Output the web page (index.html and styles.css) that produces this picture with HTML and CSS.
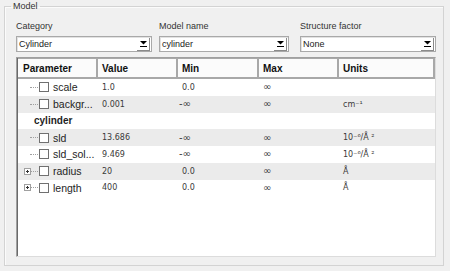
FILE: index.html
```html
<!DOCTYPE html>
<html>
<head>
<meta charset="utf-8">
<title>Model</title>
<link rel="stylesheet" href="styles.css">
</head>
<body>
<fieldset class="group">
  <legend>Model</legend>
  <div class="selectors">
    <div class="field">
      <label>Category</label>
      <div class="combo w136"><span>Cylinder</span><i class="drop"><svg width="7" height="6" viewBox="0 0 7 6"><polygon points="0,0 7,0 3.5,3.5" fill="#000"/><rect x="0" y="5" width="7" height="1" fill="#000"/></svg></i></div>
    </div>
    <div class="field">
      <label>Model name</label>
      <div class="combo w130"><span>cylinder</span><i class="drop"><svg width="7" height="6" viewBox="0 0 7 6"><polygon points="0,0 7,0 3.5,3.5" fill="#000"/><rect x="0" y="5" width="7" height="1" fill="#000"/></svg></i></div>
    </div>
    <div class="field">
      <label>Structure factor</label>
      <div class="combo w136"><span>None</span><i class="drop"><svg width="7" height="6" viewBox="0 0 7 6"><polygon points="0,0 7,0 3.5,3.5" fill="#000"/><rect x="0" y="5" width="7" height="1" fill="#000"/></svg></i></div>
    </div>
  </div>
  <div class="tree">
    <div class="row head">
      <div class="hc">Parameter</div><div class="hc">Value</div><div class="hc">Min</div><div class="hc">Max</div><div class="hc last">Units</div>
    </div>
    <div class="row">
      <div class="pc"><i class="branch"></i><i class="cb"></i><span class="pn">scale</span></div>
      <div class="vc">1.0</div><div class="vc">0.0</div><div class="vc inf">∞</div><div class="vc"></div>
    </div>
    <div class="row alt">
      <div class="pc"><i class="branch"></i><i class="cb"></i><span class="pn">backgr...</span></div>
      <div class="vc">0.001</div><div class="vc inf neg">-∞</div><div class="vc inf">∞</div><div class="vc">cm⁻¹</div>
    </div>
    <div class="row">
      <div class="pc"><span class="pn grp">cylinder</span></div>
      <div class="vc"></div><div class="vc"></div><div class="vc"></div><div class="vc"></div>
    </div>
    <div class="row alt">
      <div class="pc"><i class="branch"></i><i class="cb"></i><span class="pn">sld</span></div>
      <div class="vc">13.686</div><div class="vc inf neg">-∞</div><div class="vc inf">∞</div><div class="vc">10⁻⁶/Å ²</div>
    </div>
    <div class="row">
      <div class="pc"><i class="branch"></i><i class="cb"></i><span class="pn">sld_sol...</span></div>
      <div class="vc">9.469</div><div class="vc inf neg">-∞</div><div class="vc inf">∞</div><div class="vc">10⁻⁶/Å ²</div>
    </div>
    <div class="row alt">
      <div class="pc"><i class="exp"></i><i class="branch short"></i><i class="cb"></i><span class="pn">radius</span></div>
      <div class="vc">20</div><div class="vc">0.0</div><div class="vc inf">∞</div><div class="vc">Å</div>
    </div>
    <div class="row">
      <div class="pc"><i class="exp"></i><i class="branch short"></i><i class="cb"></i><span class="pn">length</span></div>
      <div class="vc">400</div><div class="vc">0.0</div><div class="vc inf">∞</div><div class="vc">Å</div>
    </div>
  </div>
</fieldset>
</body>
</html>
```
FILE: styles.css
```css
* { box-sizing: border-box; }
html, body { margin: 0; padding: 0; }
body {
  background: #f0f0f0;
  width: 450px;
  height: 271px;
  overflow: hidden;
  font-family: "Liberation Sans", Arial, sans-serif;
  color: #1e1e1e;
}
.group {
  margin: 0 0 0 4px;
  width: 440px;
  height: 266px;
  min-width: 0;
  padding: 8px 6px 0 11px;
  border: 1px solid #d3d3d3;
  box-shadow: inset 1px 1px #fbfbfb;
}
.group legend {
  font-size: 9px;
  line-height: 12px;
  padding: 0 2px;
  margin-left: -5px;
  color: #333;
}
.selectors {
  display: grid;
  grid-template-columns: 143px 141px 136px;
}
.field label {
  display: block;
  font-size: 9px;
  line-height: 12px;
  color: #333;
}
.combo {
  margin-top: 4px;
  height: 16px;
  border: 1px solid #a9a9a9;
  background: #fff;
  display: flex;
  align-items: center;
  justify-content: space-between;
  padding: 0 1px 0 2px;
  box-shadow: inset 1px 1px #e2e2e2;
}
.w136 { width: 136px; }
.w130 { width: 130px; }
.combo span { font-size: 9px; color: #222; }
.drop {
  width: 13px;
  height: 13px;
  border-right: 1px solid #8a8a8a;
  border-bottom: 1px solid #8a8a8a;
  background: #fff;
  display: flex;
  align-items: center;
  justify-content: center;
}
.drop svg { display: block; }
.tree {
  margin-top: 5px;
  width: 420px;
  height: 200px;
  background: #fff;
  border: 1px solid;
  border-color: #a0a0a0 #dcdcdc #dcdcdc #a0a0a0;
  padding-left: 1px;
  box-shadow: inset 1px 0 #6a6a6a;
}
.row {
  display: grid;
  grid-template-columns: 80px 80px 81px 80px 1fr;
  height: 16.75px;
  align-items: center;
}
.row.alt { background: #ebebeb; }
.head {
  height: 21px;
  background: #fbfbfb;
  border-top: 1px solid #a8a8a8;
  border-bottom: 2px solid #a8a8a8;
  align-items: stretch;
}
.hc {
  font-size: 10px;
  font-weight: bold;
  color: #111;
  padding-left: 4px;
  display: flex;
  align-items: center;
  border-right: 2px solid #a8a8a8;
}
.hc:first-child { padding-left: 5px; }
.pc {
  display: flex;
  align-items: center;
  height: 100%;
}
.branch {
  width: 8px;
  margin-left: 12px;
  border-top: 1px dotted #a0a0a0;
}
.branch.short { width: 7px; margin-left: 0; }
.exp {
  position: relative;
  width: 7px;
  height: 7px;
  margin-left: 6px;
  border: 1px solid #a0a0a0;
  background: #fff;
}
.exp::before {
  content: "";
  position: absolute;
  left: 1px;
  top: 2px;
  width: 3px;
  height: 1px;
  background: #333;
}
.exp::after {
  content: "";
  position: absolute;
  left: 2px;
  top: 1px;
  width: 1px;
  height: 3px;
  background: #333;
}
.cb {
  width: 10px;
  height: 10px;
  margin-left: 1px;
  border: 1px solid #707070;
  background: #fff;
}
.pn {
  margin-left: 4px;
  font-size: 10.5px;
  color: #1e1e1e;
  white-space: nowrap;
}
.pn.grp {
  margin-left: 16px;
  font-weight: bold;
  font-size: 10px;
}
.vc {
  padding-left: 4px;
  font-family: "DejaVu Sans", Verdana, sans-serif;
  font-size: 8px;
  color: #3a3a3a;
  white-space: nowrap;
}
.vc.inf {
  font-size: 10px;
  line-height: 12px;
}
.vc.neg { padding-left: 1px; }
```
